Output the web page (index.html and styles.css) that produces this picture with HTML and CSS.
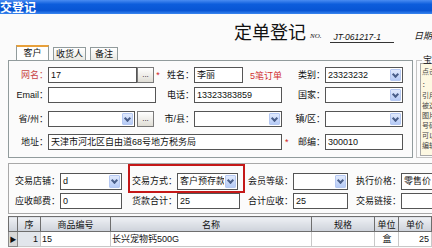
FILE: index.html
```html
<!DOCTYPE html>
<html lang="zh-CN">
<head>
    <meta charset="UTF-8">
    <meta name="viewport" content="width=device-width, initial-scale=1.0">
    <title>成交登记</title>
    <link rel="stylesheet" href="styles.css">
</head>
<body>
    <div class="titlebar"><span>成交登记</span></div>

    <div class="doc-head">
        <h1 class="doc-title">定单登记</h1>
        <span class="doc-no">NO.</span>
        <span class="doc-num">JT-061217-1</span>
        <span class="doc-date">日期</span>
    </div>

    <div class="tabs">
        <div class="tab active t1">客户</div>
        <div class="tab t2">收货人</div>
        <div class="tab t3">备注</div>
    </div>

    <div class="top">
        <div class="panel">
            <!-- row 1 -->
            <label class="lbl red">网名：</label>
            <div class="inp">17</div>
            <div class="dots">...</div>
            <span class="star">*</span>
            <label class="lbl">姓名：</label>
            <div class="combo">
                <div class="inp w52">李丽</div>
                <span class="orders">5笔订单</span>
            </div>
            <span></span>
            <label class="lbl">类别：</label>
            <div class="sel"><span class="val">23323232</span><span class="arr"></span></div>

            <!-- row 2 -->
            <label class="lbl">Email：</label>
            <div class="inp span2">&nbsp;</div>
            <span></span>
            <label class="lbl">电话：</label>
            <div class="inp">13323383859</div>
            <span></span>
            <label class="lbl">国家：</label>
            <div class="sel"><span class="val"></span><span class="arr"></span></div>

            <!-- row 3 -->
            <label class="lbl">省/州：</label>
            <div class="sel w87"><span class="val"></span><span class="arr"></span></div>
            <div class="dots">...</div>
            <span></span>
            <label class="lbl">市/县：</label>
            <div class="sel"><span class="val"></span><span class="arr"></span></div>
            <span></span>
            <label class="lbl">镇/区：</label>
            <div class="sel"><span class="val"></span><span class="arr"></span></div>

            <!-- row 4 -->
            <label class="lbl">地址：</label>
            <div class="inp span5">天津市河北区自由道68号地方税务局</div>
            <span class="star left">*</span>
            <label class="lbl">邮编：</label>
            <div class="inp">300010</div>
        </div>

        <fieldset class="group">
            <legend>宝贝信息</legend>
            <div class="note">
                <p class="first">点击宝贝图片</p>
                <p class="second">：</p>
                <p>引用宝贝信息</p>
                <p>被选中的宝贝</p>
                <p>图片</p>
                <p>号码</p>
                <p>可以</p>
                <p>编辑</p>
            </div>
        </fieldset>
    </div>

    <div class="panel2">
        <!-- row 5 -->
        <label class="lbl">交易店铺：</label>
        <div class="sel"><span class="val">d</span><span class="arr"></span></div>
        <span></span>
        <div class="redbox">
            <label class="lbl rb-lbl">交易方式：</label>
            <div class="sel rb-sel"><span class="val">客户预存款</span><span class="arr"></span></div>
        </div>
        <label class="lbl">会员等级：</label>
        <div class="sel"><span class="val"></span><span class="arr"></span></div>
        <span></span>
        <label class="lbl">执行价格：</label>
        <div class="inp">零售价</div>

        <!-- row 6 -->
        <label class="lbl">应收邮费：</label>
        <div class="inp">0</div>
        <span></span>
        <label class="lbl">货款合计：</label>
        <div class="inp">25</div>
        <span></span>
        <label class="lbl">合计应收：</label>
        <div class="inp">25</div>
        <span></span>
        <label class="lbl">交易链接：</label>
        <div class="inp">&nbsp;</div>
    </div>

    <table class="grid">
        <colgroup>
            <col style="width:9px">
            <col style="width:23px">
            <col style="width:70px">
            <col style="width:201px">
            <col style="width:63px">
            <col style="width:24px">
            <col style="width:33px">
            <col style="width:30px">
        </colgroup>
        <thead>
            <tr>
                <th></th>
                <th>序</th>
                <th>商品编号</th>
                <th>名称</th>
                <th>规格</th>
                <th>单位</th>
                <th>单价</th>
                <th></th>
            </tr>
        </thead>
        <tbody>
            <tr>
                <td class="ind">&#9654;</td>
                <td class="num">1</td>
                <td>15</td>
                <td>长兴宠物钙500G</td>
                <td></td>
                <td class="mid">盒</td>
                <td class="price">25</td>
                <td></td>
            </tr>
        </tbody>
    </table>
</body>
</html>
```

FILE: styles.css
```css
*{
    padding: 0;
    margin: 0;
    box-sizing: border-box;
}

body{
    width: 432px;
    height: 248px;
    overflow: hidden;
    background-color: #fbfbfb;
    font-family: "Liberation Sans", "Noto Sans CJK SC", sans-serif;
    font-size: 9px;
    color: #111;
}

/* window title */
.titlebar{
    height: 14px;
    background: linear-gradient(#4a8cf2, #0d5ddc 30%, #0855d4 75%, #3a86f0);
    color: white;
    font-family: "Noto Sans CJK SC", sans-serif;
    font-size: 12px;
    font-weight: bold;
    line-height: 14px;
    white-space: nowrap;
    overflow: hidden;
}
.titlebar span{
    margin-left: -12px;
}

/* order heading */
.doc-head{
    height: 31px;
    display: flex;
    align-items: flex-end;
    padding-left: 234px;
    white-space: nowrap;
}
.doc-title{
    font-family: "Noto Sans CJK SC", sans-serif;
    font-size: 18px;
    font-weight: normal;
    line-height: 18px;
    margin-bottom: 5px;
}
.doc-no{
    font-family: "Liberation Serif", serif;
    font-style: italic;
    font-size: 7px;
    line-height: 8px;
    margin-left: 4px;
    margin-bottom: 5px;
}
.doc-num{
    width: 69px;
    margin-left: 9px;
    margin-bottom: 2px;
    padding-left: 3px;
    border-bottom: 1px solid #333;
    font-style: italic;
    font-size: 8.5px;
    line-height: 9px;
}
.doc-date{
    margin-left: 20px;
    margin-bottom: 4px;
    font-style: italic;
    font-size: 9px;
    line-height: 10px;
}

/* tabs */
.tabs{
    height: 15px;
    display: flex;
    align-items: flex-end;
    gap: 4px;
    padding-left: 16px;
}
.tab{
    height: 13px;
    border: 1px solid #919b9c;
    border-bottom: none;
    background: linear-gradient(#ffffff, #e9e8e2);
    text-align: center;
    line-height: 12px;
    font-size: 9px;
}
.tab.active{
    height: 15px;
    border-top: 2px solid #e8a03a;
    background: #fff;
}
.t1{ width: 33px; }
.t2{ width: 33px; }
.t3{ width: 28px; }

/* customer panel */
.top{
    display: flex;
}
.panel{
    margin-left: 8px;
    width: 405px;
    height: 98px;
    border: 1px solid #919b9c;
    padding-top: 6px;
    display: grid;
    grid-template-columns: 39px 89px 17px 8px 32px 88px 13px 30px 78px;
    grid-template-rows: 20px 24px 23px 16px;
    align-items: start;
    align-content: start;
}
.lbl{
    display: block;
    text-align: right;
    line-height: 16px;
    white-space: nowrap;
    font-size: 9px;
}
.red{
    color: #c84545;
}
.star{
    color: #d02020;
    line-height: 16px;
    text-align: center;
}
.star.left{
    text-align: left;
    padding-left: 3px;
}
.inp{
    height: 16px;
    border: 1px solid #555;
    background: #fff;
    padding-left: 2px;
    line-height: 14px;
    font-size: 9px;
    white-space: nowrap;
    overflow: hidden;
}
.w52{
    width: 52px;
}
.span2{
    grid-column: span 2;
    width: 108px;
}
.span5{
    grid-column: span 5;
}
.combo{
    display: flex;
    align-items: center;
}
.orders{
    margin-left: 7px;
    color: #d03030;
    white-space: nowrap;
}
.dots{
    height: 16px;
    border: 1px solid #7a7a7a;
    background: linear-gradient(#ffffff, #e0ded6);
    text-align: center;
    line-height: 13px;
    font-size: 8px;
}
.sel{
    height: 16px;
    border: 1px solid #555;
    background: #fff;
    display: flex;
    overflow: hidden;
}
.sel .val{
    flex: 1;
    padding-left: 2px;
    line-height: 14px;
    white-space: nowrap;
    overflow: hidden;
}
.sel .arr{
    width: 11px;
    margin: 1px;
    border: 1px solid #b5c8f2;
    border-radius: 1px;
    background: linear-gradient(#e1eafd, #b6cbf6);
    display: flex;
    justify-content: center;
    align-items: center;
}
.sel .arr::before{
    content: "";
    width: 3px;
    height: 3px;
    margin-top: -2px;
    border-right: 2px solid #4a5f8a;
    border-bottom: 2px solid #4a5f8a;
    transform: rotate(45deg);
}
.w87{
    width: 87px;
}

/* right group */
.group{
    flex: 1;
    height: 102px;
    margin-top: -4px;
    margin-left: 3px;
    border: 1px solid #c4c4c4;
    border-right: none;
    padding: 0 0 0 3px;
    min-width: 0;
}
.group legend{
    font-size: 9px;
    line-height: 9px;
    padding: 0 1px;
    margin-left: 2px;
    white-space: nowrap;
}
.note{
    height: 93px;
    margin-top: -2px;
    width: 60px;
    border: 1px solid #a8a8a8;
    background: #fdf8e2;
    padding: 2px 0 0 1px;
    font-family: "Noto Sans CJK SC", sans-serif;
    font-size: 7px;
    line-height: 10px;
    color: #444;
    white-space: nowrap;
    overflow: hidden;
}
.note .first{
    line-height: 10px;
    margin-bottom: 3px;
}
.note .second{
    line-height: 10px;
    margin-bottom: 1px;
}

/* order panel */
.panel2{
    margin-top: 5px;
    margin-left: 8px;
    width: 440px;
    height: 51px;
    border: 1px solid #a8a8a8;
    border-right: none;
    display: grid;
    grid-template-columns: 51px 62px 6px 49px 63px 7px 46px 55px 6px 47px 40px;
    grid-template-rows: 29px 16px;
}
.panel2 > *{
    align-self: end;
}
.panel2 > .sel{
    height: 17px;
    margin-bottom: 3px;
}
.panel2 > .lbl:nth-child(1),
.panel2 > .lbl:nth-child(5),
.panel2 > .lbl:nth-child(8){
    margin-bottom: 3px;
    line-height: 17px;
}
.panel2 > .inp:nth-child(9){
    height: 17px;
    margin-bottom: 3px;
}
.redbox{
    grid-column: span 3;
    align-self: stretch;
    width: 117px;
    border: 2px solid #c41818;
    display: flex;
    align-items: flex-end;
    padding-bottom: 1px;
}
.rb-lbl{
    width: 47px;
    line-height: 17px;
}
.rb-sel{
    width: 61px;
    height: 17px;
}

/* goods table */
.grid{
    margin-top: 2px;
    margin-left: 8px;
    width: 453px;
    table-layout: fixed;
    border-collapse: collapse;
    font-size: 9px;
}
.grid th{
    height: 15px;
    font-weight: normal;
    background: linear-gradient(#eef0f4, #cdd2da);
    border: 1px solid #6e6e6e;
    text-align: center;
    line-height: 13px;
    font-family: "Noto Sans CJK SC", sans-serif;
}
.grid td{
    height: 15px;
    background: #fff;
    border: 1px solid #c8c8c8;
    padding-left: 1px;
    line-height: 13px;
    white-space: nowrap;
    overflow: hidden;
}
.grid td.ind{
    background: #d8d8d8;
    border-color: #8a8a8a;
    font-size: 7px;
    padding: 0;
    text-align: center;
}
.grid td.num{
    background: #e2e6ec;
    text-align: right;
    padding-right: 2px;
}
.grid td.mid{
    text-align: center;
}
.grid td.price{
    text-align: right;
    padding-right: 2px;
}
```
